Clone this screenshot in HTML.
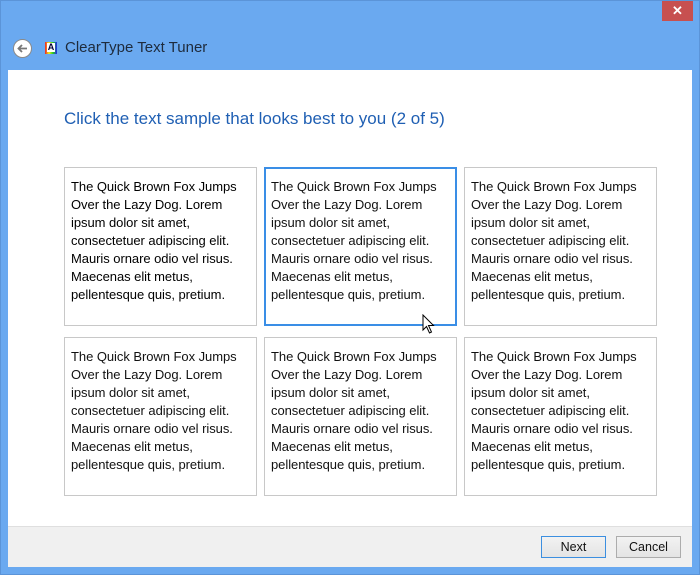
<!DOCTYPE html>
<html><head><style>
*{margin:0;padding:0;box-sizing:border-box}
body{width:700px;height:575px;background:#6aa9f0;position:relative;overflow:hidden;font-family:"Liberation Sans",sans-serif}
.frame{position:absolute;left:0;top:0;width:700px;height:575px;border:1px solid #5b94d8}
.close{position:absolute;left:662px;top:1px;width:31px;height:20px;background:#c75050;color:#fff;font-size:13px;font-weight:bold;text-align:center;line-height:20px}
.back{position:absolute;left:13px;top:39px;width:19px;height:19px;border-radius:50%;background:#fff;border:1px solid #8a8a8a}
.title{position:absolute;left:65px;top:39px;font-size:15px;color:#1e2b3c}
.icon{position:absolute;left:45px;top:42px;width:12px;height:12px;background:linear-gradient(90deg,#e22,#ee2,#2c2,#22e);font-size:9px;text-align:center;line-height:11px;color:#003;font-weight:bold}
.icon span{background:#fff;display:inline-block;width:8px;height:9px;line-height:9px}
.content{position:absolute;left:8px;top:70px;width:684px;height:456px;background:#fff}
.footer{position:absolute;left:8px;top:526px;width:684px;height:41px;background:#f0f0f0;border-top:1px solid #dfdfdf}
h1{position:absolute;left:64px;top:109px;font-weight:normal;font-size:17px;color:#1f5fb3}
.box{position:absolute;width:193px;height:159px;border:1px solid #c8c8c8;padding:10px 0 0 6px;font-size:13px;line-height:18px;color:#111;white-space:nowrap;letter-spacing:-0.05px}
.sel{border:2px solid #3a8ee6;padding:9px 0 0 5px}
.b1{color:#000}
.btn{position:absolute;top:536px;height:22px;font-size:12.5px;text-align:center;line-height:20px;color:#111;background:linear-gradient(#f2f2f2,#e4e4e4)}
</style></head><body>
<div class="frame"></div>
<div class="close">✕</div>
<div class="back"><svg width="17" height="17" viewBox="0 0 17 17"><path d="M13 8.5H4.5M8 5L4.5 8.5L8 12" stroke="#777" stroke-width="1.8" fill="none"/></svg></div>
<div class="icon"><span>A</span></div>
<div class="title">ClearType Text Tuner</div>
<div class="content"></div>
<div class="footer"></div>
<h1>Click the text sample that looks best to you (2 of 5)</h1>
<div class="box b1" style="left:64px;top:167px">The Quick Brown Fox Jumps<br>Over the Lazy Dog. Lorem<br>ipsum dolor sit amet,<br>consectetuer adipiscing elit.<br>Mauris ornare odio vel risus.<br>Maecenas elit metus,<br>pellentesque quis, pretium.</div>
<div class="box sel" style="left:264px;top:167px">The Quick Brown Fox Jumps<br>Over the Lazy Dog. Lorem<br>ipsum dolor sit amet,<br>consectetuer adipiscing elit.<br>Mauris ornare odio vel risus.<br>Maecenas elit metus,<br>pellentesque quis, pretium.</div>
<div class="box" style="left:464px;top:167px">The Quick Brown Fox Jumps<br>Over the Lazy Dog. Lorem<br>ipsum dolor sit amet,<br>consectetuer adipiscing elit.<br>Mauris ornare odio vel risus.<br>Maecenas elit metus,<br>pellentesque quis, pretium.</div>
<div class="box" style="left:64px;top:337px">The Quick Brown Fox Jumps<br>Over the Lazy Dog. Lorem<br>ipsum dolor sit amet,<br>consectetuer adipiscing elit.<br>Mauris ornare odio vel risus.<br>Maecenas elit metus,<br>pellentesque quis, pretium.</div>
<div class="box" style="left:264px;top:337px">The Quick Brown Fox Jumps<br>Over the Lazy Dog. Lorem<br>ipsum dolor sit amet,<br>consectetuer adipiscing elit.<br>Mauris ornare odio vel risus.<br>Maecenas elit metus,<br>pellentesque quis, pretium.</div>
<div class="box" style="left:464px;top:337px">The Quick Brown Fox Jumps<br>Over the Lazy Dog. Lorem<br>ipsum dolor sit amet,<br>consectetuer adipiscing elit.<br>Mauris ornare odio vel risus.<br>Maecenas elit metus,<br>pellentesque quis, pretium.</div>
<svg style="position:absolute;left:422px;top:314px" width="14" height="20" viewBox="0 0 14 20"><path d="M1 1V16L4.5 12.5L7.5 19L9.5 18L6.5 11.5H11.5Z" fill="#fff" stroke="#000" stroke-width="1"/></svg>
<div class="btn" style="left:541px;width:65px;border:1px solid #3c8fe0">Next</div>
<div class="btn" style="left:616px;width:65px;border:1px solid #acacac">Cancel</div>
</body></html>
